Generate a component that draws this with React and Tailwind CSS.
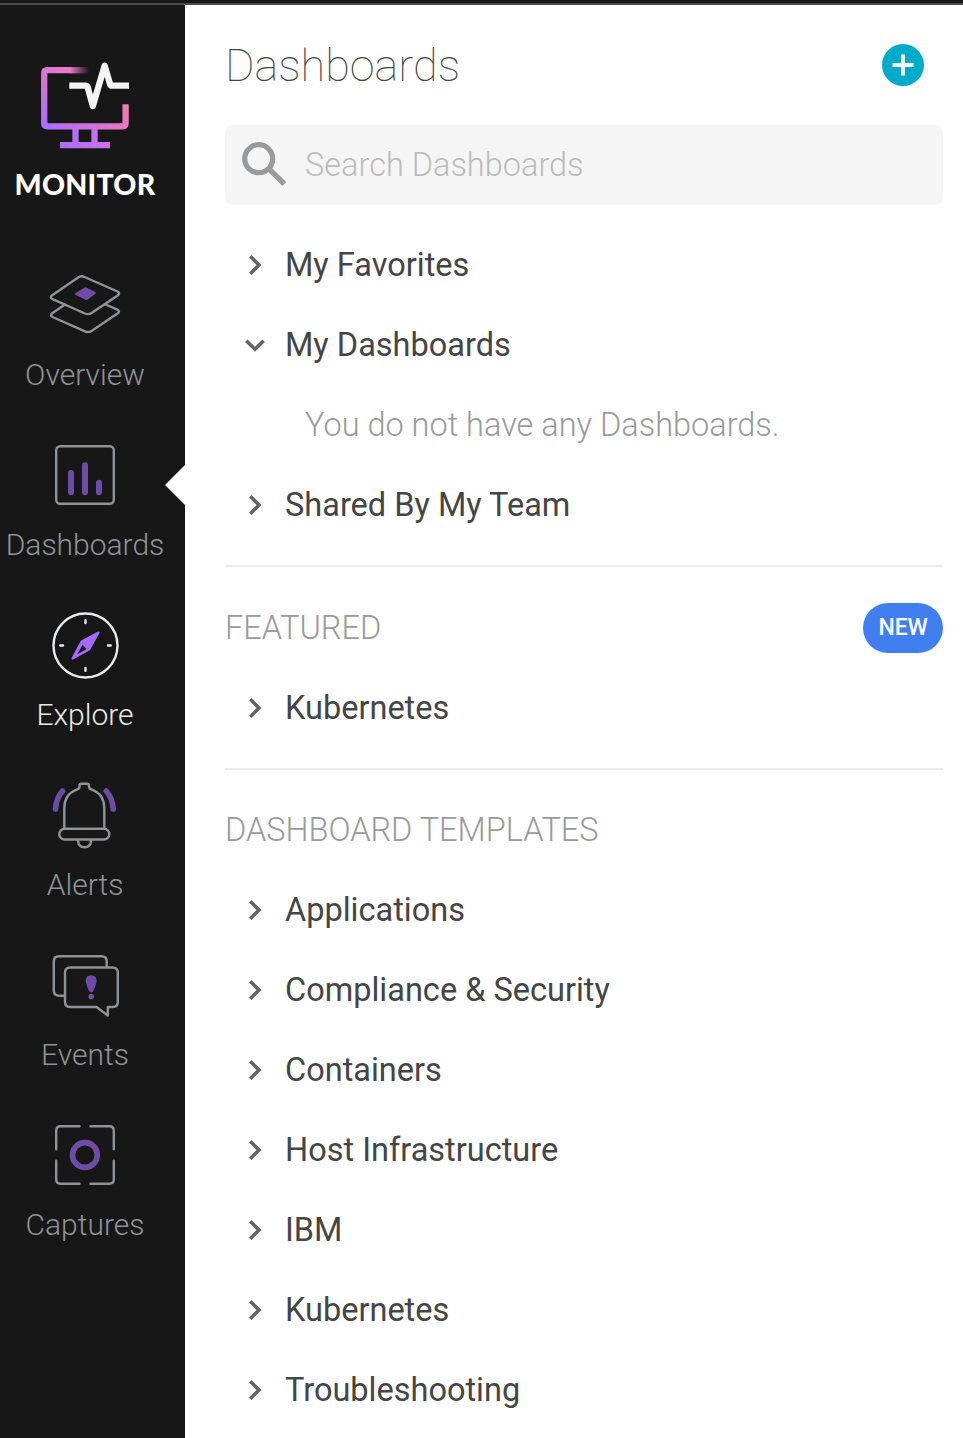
import React from "react";

const LINE = "#8e9397";
const ACCENT = "#6e4ca5";

function MonitorLogo() {
  return (
    <svg className="h-[100px] w-[185px]" viewBox="0 55 185 100" fill="none">
      <defs>
        <linearGradient id="left" gradientUnits="userSpaceOnUse" x1="44" y1="126" x2="72" y2="70">
          <stop offset="0" stopColor="#ab6cff" />
          <stop offset="1" stopColor="#ea78c8" />
        </linearGradient>
        <linearGradient id="fade" gradientUnits="userSpaceOnUse" x1="70" y1="0" x2="89" y2="0">
          <stop offset="0" stopColor="#ea78c8" />
          <stop offset="1" stopColor="#ea78c8" stopOpacity="0" />
        </linearGradient>
        <linearGradient id="bottom" gradientUnits="userSpaceOnUse" x1="44" y1="130" x2="126" y2="108">
          <stop offset="0" stopColor="#ab6cff" />
          <stop offset="1" stopColor="#ef78bd" />
        </linearGradient>
        <linearGradient id="stand" gradientUnits="userSpaceOnUse" x1="60" y1="148" x2="110" y2="135">
          <stop offset="0" stopColor="#ab6cff" />
          <stop offset="1" stopColor="#cf72e2" />
        </linearGradient>
      </defs>
      <path d="M75.500 129V143M94.500 129V143M60 145.200H110" stroke="url(#stand)" strokeWidth="6.300" />
      <path d="M44.200 122V123.300Q44.200 126.300 47.200 126.300H122.600Q125.600 126.300 125.600 123.300V104.300" stroke="url(#bottom)" strokeWidth="6.300" />
      <path d="M44.200 123V73.300Q44.200 70.200 47.300 70.200H70.500" stroke="url(#left)" strokeWidth="6.300" />
      <path d="M70 67.050H89V73.350H70Z" fill="url(#fade)" />
      <path d="M69.300 85.700H85.500Q87.200 85.700 87.700 87.300L92.800 106L104.700 65.700L110 84Q110.500 85.700 112.200 85.700H129" stroke="#f4f4f4" strokeWidth="6.300" strokeLinejoin="round" />
    </svg>
  );
}

function OverviewIcon() {
  return (
    <>
      <path d="M65 304.500L52.200 313.200Q49.500 315.300 52.500 317L85 331.300Q88.500 333 91.500 331L117.500 313.500Q120.500 311.300 117.500 309.700L105.500 304.500" />
      <path d="M52.200 295.200L78.500 277.300Q81.300 275.500 84.500 277L117.500 291.500Q120.700 293.300 117.700 295.400L91.500 313Q88.500 315 85 313.500L52.500 299.200Q49.300 297.400 52.200 295.200Z" />
      <path d="M75.700 292.900L84.300 287.700Q85.300 287.100 86.400 287.600L95.300 292Q96.500 292.800 95.300 293.700L88 299.500Q86.800 300.300 85.500 299.700L75.700 294.900Q74 294 75.700 292.900Z" fill={ACCENT} stroke="none" />
    </>
  );
}

function DashboardsIcon() {
  return (
    <>
      <rect x="56.200" y="446.200" width="57.600" height="57.600" rx="4" />
      <path d="M71 473V492.200M85 465.200V492.200M99 482.800V492.200" stroke={ACCENT} strokeWidth="6" />
    </>
  );
}

function ExploreIcon() {
  return (
    <>
      <circle cx="85.500" cy="645.500" r="32" />
      <path d="M85.500 620.300V623M85.500 668V670.700M60.300 645.500H63M108 645.500H110.700" />
      <path d="M98.500 632.500L81.700 641.500L72.500 658.500L89.300 649.200Z" fill="#a46bff" stroke="#a46bff" strokeWidth="2.200" />
      <path d="M82.500 644.700L86.500 648.900L77.300 654.200Z" fill="#171717" stroke="none" />
    </>
  );
}

function AlertsIcon() {
  return (
    <>
      <path d="M64.300 828.500V808Q64.300 794.500 76.500 789.700Q79.500 788.800 79.500 787V785.500Q79.500 783.700 81.500 783.700H87Q89 783.700 89 785.500V787Q89 788.800 92 789.700Q104.300 794.500 104.300 808V828.500" />
      <rect x="59.300" y="828.800" width="50" height="10.700" rx="5.350" />
      <path d="M78 840Q78 847.300 84.500 847.300Q91 847.300 91 840" />
      <path d="M62.500 791Q56 798.500 55.500 809M106.200 791Q112.800 798.500 113.200 809" stroke={ACCENT} strokeWidth="5.600" />
    </>
  );
}

function EventsIcon() {
  return (
    <>
      <path d="M64.500 995.800H59Q53.800 995.800 53.800 990.500V961.500Q53.800 956.300 59 956.300H101.500Q106.700 956.300 106.700 961.500V967" />
      <path d="M70.300 967.500H112.500Q117.800 967.500 117.800 972.800V1001.700Q117.800 1007 112.500 1007H107.800V1015.500L96.500 1007H70.300Q65 1007 65 1001.700V972.800Q65 967.500 70.300 967.500Z" />
      <path d="M91.200 975.200C95 975.200 97 978 96.600 981.500Q96.200 985 93.800 990.300Q92.700 992.600 91.200 992.600Q89.700 992.600 88.600 990.300Q86.200 985 85.800 981.500C85.400 978 87.400 975.200 91.200 975.200Z" fill={ACCENT} stroke="none" />
      <circle cx="91.200" cy="996.600" r="2.800" fill={ACCENT} stroke="none" />
    </>
  );
}

function CapturesIcon() {
  return (
    <>
      <path d="M79.500 1126.200H60.700Q56.200 1126.200 56.200 1130.700V1149.300M90.500 1126.200H109.300Q113.800 1126.200 113.800 1130.700V1149.300M113.800 1160.700V1179.300Q113.800 1183.800 109.300 1183.800H90.500M79.500 1183.800H60.700Q56.200 1183.800 56.200 1179.300V1160.700" />
      <circle cx="84.900" cy="1155" r="12.400" stroke={ACCENT} strokeWidth="5.700" />
    </>
  );
}

const NAV = [
  { label: "Overview", Icon: OverviewIcon, view: "0 265 185 80" },
  { label: "Dashboards", Icon: DashboardsIcon, view: "0 435 185 80", current: true },
  { label: "Explore", Icon: ExploreIcon, view: "0 605 185 80", bright: true },
  { label: "Alerts", Icon: AlertsIcon, view: "0 775 185 80" },
  { label: "Events", Icon: EventsIcon, view: "0 945 185 80" },
  { label: "Captures", Icon: CapturesIcon, view: "0 1115 185 80" },
];

function NavItem({ label, Icon, view, bright, current }) {
  return (
    <a className="relative flex h-[170px] w-[185px] flex-col pt-5">
      <svg
        className="h-20 w-[185px] shrink-0"
        viewBox={view}
        fill="none"
        stroke={bright ? "#e7ebee" : LINE}
        strokeWidth="2.400"
        strokeLinecap="round"
        strokeLinejoin="round"
      >
        <Icon />
      </svg>
      <span
        className={
          "mt-[10px] w-[170px] text-center text-[30px] leading-10 font-light whitespace-nowrap " +
          (bright ? "text-[#e7ebee]" : "text-[#8e9397]")
        }
      >
        {label}
      </span>
      {current && (
        <svg className="absolute top-10 right-0 mt-[10px] h-10 w-5" viewBox="0 0 20 40">
          <path d="M20 0L0 20L20 40Z" fill="#fff" />
        </svg>
      )}
    </a>
  );
}

function Row({ label, open }) {
  return (
    <div className="flex h-20 items-center">
      <svg className="h-[60px] w-[60px]" viewBox="0 0 60 60" fill="none" stroke="#636466" strokeWidth="3.600">
        {open ? <path d="M21.300 25.700L30 34.300L38.700 25.700" /> : <path d="M25.300 21.300L34 30L25.300 38.700" />}
      </svg>
      <span className="text-[32.500px] leading-10 text-[#444547]">{label}</span>
    </div>
  );
}

export default function App() {
  return (
    <div className="flex h-[1438px] w-[963px] flex-col overflow-hidden bg-white font-['Roboto',sans-serif]">
      <div className="h-[5px] shrink-0 border-b-2 border-[#4d4d4d] bg-[#171717]" />
      <div className="flex min-h-0 flex-1">
        <nav className="flex w-[185px] shrink-0 flex-col bg-[#171717] pt-[50px]">
          <MonitorLogo />
          <div className="mt-[9px] h-[41px] w-[170px] text-center font-['Lato',sans-serif] text-[28.500px] leading-10 font-black tracking-[0.250px] text-white">
            MONITOR
          </div>
          <div className="mt-10 flex flex-col">
            {NAV.map((item) => (
              <NavItem key={item.label} {...item} />
            ))}
          </div>
        </nav>
        <main className="min-w-0 flex-1 pr-5 pl-10">
          <header className="flex h-[120px] items-center justify-between pr-[19px]">
            <h1 className="pt-[2px] text-[45px] leading-[60px] font-thin text-[#444547]">Dashboards</h1>
            <svg className="h-[42px] w-[42px]" viewBox="0 0 42 42">
              <circle cx="21" cy="21" r="21" fill="#00abc9" />
              <path d="M10.500 21H31.500M21 10.500V31.500" stroke="#fff" strokeWidth="4" />
            </svg>
          </header>
          <div className="flex h-20 items-center rounded-[8px] bg-[#f5f5f5]">
            <svg className="h-20 w-20" viewBox="225 125 80 80" fill="none" stroke="#999a9c">
              <circle cx="258.700" cy="158.700" r="14" strokeWidth="5.200" />
              <path d="M270 169.800L284.300 184" strokeWidth="5.400" />
            </svg>
            <span className="text-[32.500px] leading-10 font-light text-[#bcbcbc]">Search Dashboards</span>
          </div>
          <section className="mt-5 border-b-2 border-[#ededed] pb-5">
            <Row label="My Favorites" />
            <Row label="My Dashboards" open />
            <p className="flex h-20 items-center pl-20 text-[32.500px] font-light text-[#999a9c]">
              You do not have any Dashboards.
            </p>
            <Row label="Shared By My Team" />
          </section>
          <section className="mt-[21px] border-b-2 border-[#ededed] pb-5">
            <div className="flex h-20 items-center justify-between">
              <h2 className="text-[32.500px] font-light text-[#999a9c]">FEATURED</h2>
              <span className="flex h-[50px] w-20 items-center justify-center rounded-[25px] bg-[#417ff1] pb-px text-[23px] leading-[33px] font-medium tracking-[-0.200px] text-white">
                NEW
              </span>
            </div>
            <Row label="Kubernetes" />
          </section>
          <section className="mt-5">
            <h2 className="flex h-20 items-center text-[32.500px] font-light text-[#999a9c]">DASHBOARD TEMPLATES</h2>
            <Row label="Applications" />
            <Row label="Compliance &amp; Security" />
            <Row label="Containers" />
            <Row label="Host Infrastructure" />
            <Row label="IBM" />
            <Row label="Kubernetes" />
            <Row label="Troubleshooting" />
          </section>
        </main>
      </div>
    </div>
  );
}
